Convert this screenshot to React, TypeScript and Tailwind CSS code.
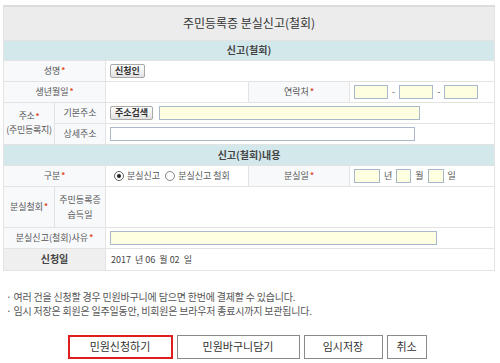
import React from "react";

const Star = () => <span className="ml-[1px] text-[8px] font-bold text-[#e0451f] align-top">*</span>;

const labelCls = "bg-[#f8f9fb] text-center text-[#555] border border-[#e3e3e3] font-normal whitespace-nowrap p-0";
const valueCls = "border border-[#e3e3e3] px-[4px] text-left whitespace-nowrap p-0";
const yellowInput = "h-[14px] bg-[#fefee0] border border-[#a9b8cb] outline-none";

const SmallBtn = ({ children }: { children: React.ReactNode }) => (
  <button className="h-[14px] px-[4px] text-[9px] font-bold leading-[12px] text-[#333] bg-gradient-to-b from-white to-[#e2e2e2] border border-[#a8a8a8] rounded-[2px]">
    {children}
  </button>
);

export default function App() {
  return (
    <div className="w-[500px] h-[363px] overflow-hidden bg-white pt-[5px] pl-[3px] text-[9px] text-[#555] font-['Noto_Sans_CJK_KR','Noto_Sans',sans-serif] leading-none">
      <table className="w-[491px] table-fixed border-collapse border-t-2 border-t-[#dcdcdc]">
        <colgroup>
          <col className="w-[51px]" />
          <col className="w-[51px]" />
          <col className="w-[143px]" />
          <col className="w-[101px]" />
          <col className="w-[145px]" />
        </colgroup>
        <tbody>
          <tr className="h-[34px]">
            <th colSpan={5} className="bg-[#ececec] border border-[#e3e3e3] text-[12px] font-normal text-[#333]">
              주민등록증 분실신고(철회)
            </th>
          </tr>
          <tr className="h-[20px]">
            <th colSpan={5} className="bg-[#d3e8eb] border border-[#e3e3e3] text-[10px] font-bold text-[#444]">
              신고(철회)
            </th>
          </tr>
          <tr className="h-[21px]">
            <th colSpan={2} className={labelCls}>성명<Star /></th>
            <td colSpan={3} className={`${valueCls} pl-[4px]`}><SmallBtn>신청인</SmallBtn></td>
          </tr>
          <tr className="h-[21px]">
            <th colSpan={2} className={labelCls}>생년월일<Star /></th>
            <td className={valueCls}></td>
            <th className={labelCls}>연락처<Star /></th>
            <td className={`${valueCls} pl-[4px]`}>
              <div className="flex items-center gap-[4px]">
                <input className={`${yellowInput} w-[34px]`} />
                <span>-</span>
                <input className={`${yellowInput} w-[34px]`} />
                <span>-</span>
                <input className={`${yellowInput} w-[34px]`} />
              </div>
            </td>
          </tr>
          <tr className="h-[21px]">
            <th rowSpan={2} className={`${labelCls} leading-[14px] tracking-[-0.3px]`}>주소<Star /><br />(주민등록지)</th>
            <th className={labelCls}>기본주소</th>
            <td colSpan={3} className={`${valueCls} pl-[4px]`}>
              <div className="flex items-center gap-[6px]">
                <SmallBtn>주소검색</SmallBtn>
                <input className={`${yellowInput} w-[261px]`} />
              </div>
            </td>
          </tr>
          <tr className="h-[21px]">
            <th className={labelCls}>상세주소</th>
            <td colSpan={3} className={`${valueCls} pl-[4px]`}>
              <input className="h-[14px] w-[305px] bg-white border border-[#a9b8cb] outline-none" />
            </td>
          </tr>
          <tr className="h-[21px]">
            <th colSpan={5} className="bg-[#d3e8eb] border border-[#e3e3e3] text-[10px] font-bold text-[#444]">
              신고(철회)내용
            </th>
          </tr>
          <tr className="h-[21px]">
            <th colSpan={2} className={labelCls}>구분<Star /></th>
            <td className={`${valueCls} pl-[8px]`}>
              <div className="flex items-center gap-[3px]">
                <span className="w-[10px] h-[10px] rounded-full border border-[#666] flex items-center justify-center">
                  <span className="w-[4px] h-[4px] rounded-full bg-[#222]" />
                </span>
                <span>분실신고</span>
                <span className="ml-[2px] w-[10px] h-[10px] rounded-full border border-[#888]" />
                <span>분실신고 철회</span>
              </div>
            </td>
            <th className={labelCls}>분실일<Star /></th>
            <td className={`${valueCls} pl-[4px]`}>
              <div className="flex items-center gap-[4px]">
                <input className={`${yellowInput} w-[26px]`} />
                <span>년</span>
                <input className={`${yellowInput} w-[15px]`} />
                <span>월</span>
                <input className={`${yellowInput} w-[16px]`} />
                <span>일</span>
              </div>
            </td>
          </tr>
          <tr className="h-[41px]">
            <th className={labelCls}>분실철회<Star /></th>
            <th className={`${labelCls} leading-[15px]`}>주민등록증<br />습득일</th>
            <td colSpan={3} className={valueCls}></td>
          </tr>
          <tr className="h-[21px]">
            <th colSpan={2} className={labelCls}>분실신고(철회)사유<Star /></th>
            <td colSpan={3} className={`${valueCls} pl-[4px]`}>
              <input className={`${yellowInput} w-[327px]`} />
            </td>
          </tr>
          <tr className="h-[22px]">
            <th colSpan={2} className="bg-[#efefef] border border-[#e3e3e3] text-center font-bold text-[10px] text-[#444]">신청일</th>
            <td colSpan={3} className={`${valueCls} pl-[5px] text-[9px] text-[#444]`}>
              2017&nbsp;&nbsp;년 06&nbsp;&nbsp;월 02&nbsp;&nbsp;일
            </td>
          </tr>
        </tbody>
      </table>

      <div className="mt-[19px] pl-[3px] text-[10px] tracking-[-0.2px] text-[#555] leading-[14px] whitespace-nowrap">
        <p>· 여러 건을 신청할 경우 민원바구니에 담으면 한번에 결제할 수 있습니다.</p>
        <p>· 임시 저장은 회원은 일주일동안, 비회원은 브라우저 종료시까지 보관됩니다.</p>
      </div>

      <div className="mt-[17px] flex justify-center gap-[4px] pr-[9px] text-[11px] text-[#333]">
        <button className="w-[105px] h-[24px] border-2 border-[#dd1f1f] bg-white">민원신청하기</button>
        <button className="w-[123px] h-[24px] border border-[#8a8a8a] bg-white">민원바구니담기</button>
        <button className="w-[79px] h-[24px] border border-[#8a8a8a] bg-white">임시저장</button>
        <button className="w-[40px] h-[24px] border border-[#8a8a8a] bg-white">취소</button>
      </div>
    </div>
  );
}
